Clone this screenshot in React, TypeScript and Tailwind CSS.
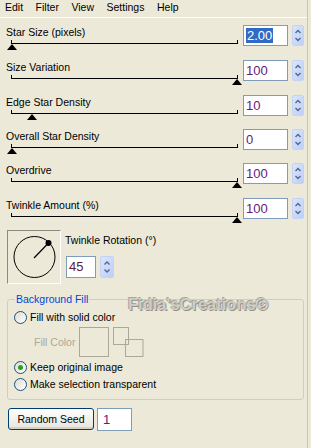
import React from 'react';

interface SliderRow {
  label: string;
  value: string;
  pos: number;
  selected?: boolean;
  rowClass: string;
}

const rows: SliderRow[] = [
  { label: 'Star Size (pixels)', value: '2.00', pos: 0, selected: true, rowClass: 'h-[35px]' },
  { label: 'Size Variation', value: '100', pos: 1, rowClass: 'h-[35px]' },
  { label: 'Edge Star Density', value: '10', pos: 0.09, rowClass: 'h-[34px]' },
  { label: 'Overall Star Density', value: '0', pos: 0, rowClass: 'h-[34px]' },
  { label: 'Overdrive', value: '100', pos: 1, rowClass: 'h-[35px]' },
  { label: 'Twinkle Amount (%)', value: '100', pos: 1, rowClass: 'h-[32px]' },
];

const Spin: React.FC<{ className?: string; w?: number; h?: number }> = ({ className, w = 12, h = 21 }) => (
  <svg width={w} height={h} viewBox={`0 0 ${w} ${h}`} className={className}>
    <defs>
      <linearGradient id={`spin${w}${h}`} x1="0" y1="0" x2="1" y2="1">
        <stop offset="0" stopColor="#DCE6FD" />
        <stop offset="1" stopColor="#BCCEF6" />
      </linearGradient>
    </defs>
    <rect x="0.5" y="0.5" width={w - 1} height={h - 1} rx="1.5" fill={`url(#spin${w}${h})`} stroke="#C4D3F5" />
    <path d={`M${w / 2 - 2.5} ${h / 2 - 2.5} L${w / 2} ${h / 2 - 5} L${w / 2 + 2.5} ${h / 2 - 2.5}`} stroke="#54678C" strokeWidth="1.4" fill="none" />
    <path d={`M${w / 2 - 2.5} ${h / 2 + 2.5} L${w / 2} ${h / 2 + 5} L${w / 2 + 2.5} ${h / 2 + 2.5}`} stroke="#54678C" strokeWidth="1.4" fill="none" />
  </svg>
);

const Radio: React.FC<{ checked?: boolean }> = ({ checked }) => (
  <span className="w-[13px] h-[13px] shrink-0 rounded-full border border-[#1C5180] bg-linear-to-br from-[#DCDBD3] to-white flex items-center justify-center">
    {checked && <span className="w-[5px] h-[5px] rounded-full bg-[#22A422]" />}
  </span>
);

export default function App() {
  return (
    <div className="w-[311px] h-[448px] bg-[#ECE9D8] text-[10.5px] text-black [font-family:'Liberation_Sans',Arial,sans-serif] overflow-hidden">
      <div className="w-[308px] h-[448px] border-r border-[#C9C6B6]">
        {/* menu */}
        <div className="h-[18px] border-b border-white flex gap-[12.5px] pl-[5px] leading-[15px]">
          <span>Edit</span>
          <span>Filter</span>
          <span>View</span>
          <span>Settings</span>
          <span>Help</span>
        </div>

        {/* sliders */}
        <div className="mt-[7px]">
          {rows.map((r) => (
            <div key={r.label} className={`flex ${r.rowClass}`}>
              <div className="w-[243px]">
                <div className="pl-[6px] pt-[1px] leading-[13px]">{r.label}</div>
                <div className="relative mt-[1px] ml-[11px] w-[227px] h-[4px] border-l border-r border-b border-black">
                  <div
                    className="absolute top-[4px] w-[1px] h-0 border-l-[5px] border-r-[5px] border-b-[6px] border-l-transparent border-r-transparent border-b-black"
                    style={{ left: `${Math.round(r.pos * 225) - 5}px` }}
                  />
                </div>
              </div>
              <div className="w-[45px] h-[21px] border border-[#7F9DB9] bg-white pl-[2px] flex items-center text-[13px] text-[#651A79] leading-[15px]">
                {r.selected ? <span className="bg-[#316AC5] text-white px-[1px]">{r.value}</span> : r.value}
              </div>
              <Spin className="ml-[4px]" />
            </div>
          ))}
        </div>

        {/* twinkle rotation */}
        <div className="flex">
          <div className="ml-[7px] w-[54px] h-[54px] border border-t-[#8C8A80] border-l-[#8C8A80] border-b-white border-r-white">
            <svg width="52" height="52" viewBox="0 0 52 52">
              <circle cx="26.5" cy="26" r="20.5" fill="none" stroke="#000" strokeWidth="1" />
              <line x1="26" y1="27" x2="40.5" y2="12" stroke="#000" strokeWidth="1.2" />
              <circle cx="40.5" cy="12" r="3" fill="#000" />
            </svg>
          </div>
          <div className="ml-[4px]">
            <div className="pt-[4px] leading-[13px]">Twinkle Rotation (°)</div>
            <div className="flex mt-[9px] ml-[1px]">
              <div className="w-[30px] h-[22px] border border-[#7F9DB9] bg-white pl-[2px] flex items-center text-[13px] text-[#5A1A3A]">
                45
              </div>
              <Spin className="ml-[4px]" w={14} h={22} />
            </div>
          </div>
        </div>

        {/* background fill group */}
        <div className="relative">
          <fieldset className="mt-[9px] ml-[7px] w-[297px] border border-[#D0CEBF] rounded-[3px] pl-[6px] pb-[8px]">
            <legend className="ml-[1px] px-[1px] leading-[13px] text-[#0046D5]">Background Fill</legend>
            <label className="flex items-center gap-[3px] mt-[5px] leading-[13px]">
              <Radio />
              <span>Fill with solid color</span>
            </label>
            <div className="flex items-center mt-[3px]">
              <span className="pl-[20px] w-[65px] text-[#ACA899] leading-[13px]">Fill Color</span>
              <div className="w-[30px] h-[30px] border border-[#ACA899]" />
              <svg width="31" height="30" viewBox="0 0 31 30" className="ml-[4px]">
                <rect x="0.5" y="0.5" width="15" height="17" fill="none" stroke="#ACA899" />
                <rect x="12.5" y="12.5" width="17.5" height="17" fill="none" stroke="#ACA899" />
              </svg>
            </div>
            <label className="flex items-center gap-[3px] mt-[4px] leading-[13px]">
              <Radio checked />
              <span>Keep original image</span>
            </label>
            <label className="flex items-center gap-[3px] mt-[4px] leading-[13px]">
              <Radio />
              <span>Make selection transparent</span>
            </label>
          </fieldset>
          <span className="absolute left-[128px] top-[2px] text-[16.5px] font-bold leading-[18px] text-[#CFCDC3] [text-shadow:1px_1px_0_#94928A,-1px_-1px_0_#A8A69D]">
            Fidia'sCreations©
          </span>
        </div>

        {/* random seed */}
        <div className="flex mt-[8px] ml-[8px]">
          <button className="w-[86px] h-[22px] rounded-[3px] border border-[#003C74] bg-linear-to-b from-white to-[#E6E4DC] shadow-[inset_0_-2px_0_#D6D0C5] leading-[13px]">
            Random Seed
          </button>
          <div className="ml-[3px] w-[35px] h-[23px] border border-[#7F9DB9] bg-white pl-[5px] flex items-center text-[13px] text-[#651A79]">
            1
          </div>
        </div>
      </div>
    </div>
  );
}
